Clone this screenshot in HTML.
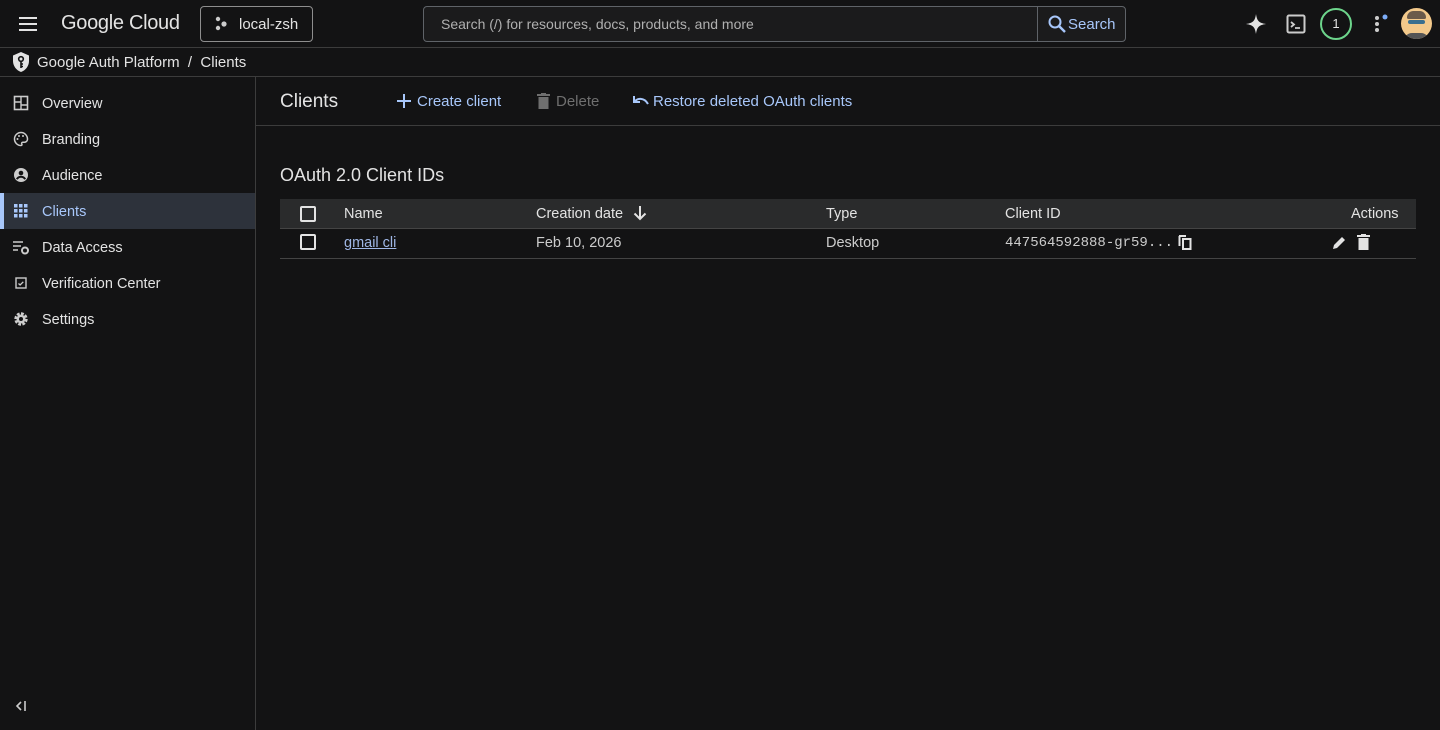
<!DOCTYPE html>
<html><head><meta charset="utf-8"><style>
*{box-sizing:border-box;margin:0;padding:0}
body{width:1440px;height:730px;background:#131314;color:#e3e3e3;font-family:"Liberation Sans",sans-serif;position:relative;overflow:hidden;font-size:14px}
.a{position:absolute}
.bl{color:#a8c7fa}
svg{display:block}
</style></head><body>
<!-- top bar -->
<div class="a" style="left:0;top:0;width:1440px;height:48px;border-bottom:1px solid #3c3c3c"></div>
<svg class="a" style="left:18px;top:14px" width="20" height="20" viewBox="0 0 20 20"><path d="M1 4h18M1 10h18M1 16h18" stroke="#e3e3e3" stroke-width="2"/></svg>
<div class="a" style="left:61px;top:12px;font-size:20px;letter-spacing:-0.3px;color:#e3e3e3">Google Cloud</div>
<div class="a" style="left:200px;top:6px;width:113px;height:36px;border:1px solid #8e8e8e;border-radius:4px"></div>
<svg class="a" style="left:214px;top:16px" width="16" height="16" viewBox="0 0 16 16"><circle cx="4" cy="3" r="2.2" fill="#ccc"/><circle cx="4" cy="12" r="2.2" fill="#ccc"/><circle cx="10" cy="8" r="2.6" fill="#ccc"/></svg>
<div class="a" style="left:239px;top:16px;font-size:15px">local-zsh</div>
<div class="a" style="left:423px;top:6px;width:703px;height:36px;border:1px solid #5f6368;border-radius:4px;background:#1b1b1c"></div>
<div class="a" style="left:1037px;top:7px;width:1px;height:34px;background:#5f6368"></div>
<div class="a" style="left:441px;top:16px;font-size:14px;color:#b0b0b0">Search (/) for resources, docs, products, and more</div>
<svg class="a" style="left:1047px;top:14px" width="20" height="20" viewBox="0 0 20 20"><circle cx="8" cy="8" r="5.5" stroke="#a8c7fa" stroke-width="2" fill="none"/><path d="M12 12l6 6" stroke="#a8c7fa" stroke-width="2.4"/></svg>
<div class="a bl" style="left:1068px;top:16px;font-size:15px">Search</div>
<svg class="a" style="left:1245px;top:13px" width="22" height="22" viewBox="0 0 22 22"><path d="M11 1C12 8 14 10 21 11C14 12 12 14 11 21C10 14 8 12 1 11C8 10 10 8 11 1Z" fill="#e3e3e3"/></svg>
<svg class="a" style="left:1286px;top:14px" width="20" height="20" viewBox="0 0 20 20"><rect x="1.5" y="1.5" width="17" height="17" rx="1.5" stroke="#ccc" stroke-width="2" fill="none"/><path d="M5 8l3 2.5-3 2.5M9 14h5" stroke="#ccc" stroke-width="1.8" fill="none"/></svg>
<div class="a" style="left:1320px;top:8px;width:32px;height:32px;border:2px solid #6dd58c;border-radius:50%;text-align:center;line-height:28px;font-size:13px;color:#e3e3e3">1</div>
<svg class="a" style="left:1370px;top:12px" width="22" height="22" viewBox="0 0 22 22"><circle cx="7" cy="6" r="2" fill="#ccc"/><circle cx="7" cy="12" r="2" fill="#ccc"/><circle cx="7" cy="18" r="2" fill="#ccc"/><circle cx="15" cy="5" r="2.5" fill="#7cacf8"/></svg>
<div class="a" style="left:1401px;top:8px;width:31px;height:31px;border-radius:50%;background:#f3c98b;overflow:hidden"><div class="a" style="left:6px;top:3px;width:19px;height:8px;background:#6b5a4a;border-radius:8px 8px 2px 2px"></div><div class="a" style="left:7px;top:12px;width:17px;height:4px;background:#3a6f8f;border-radius:2px"></div><div class="a" style="left:3px;top:25px;width:25px;height:10px;background:#555;border-radius:8px 8px 0 0"></div></div>
<!-- breadcrumb -->
<div class="a" style="left:0;top:76px;width:1440px;height:1px;background:#3c3c3c"></div>
<svg class="a" style="left:11px;top:51px" width="20" height="22" viewBox="0 0 20 22"><path d="M10 1L2 4.5V10c0 5 3.5 9.5 8 11 4.5-1.5 8-6 8-11V4.5Z" fill="#e3e3e3"/><circle cx="10" cy="8" r="2.3" stroke="#131314" stroke-width="1.6" fill="none"/><path d="M10 10v7M10 13h2M10 15.5h2" stroke="#131314" stroke-width="1.6"/></svg>
<div class="a" style="left:37px;top:54px;font-size:15px">Google Auth Platform &nbsp;/&nbsp; Clients</div>
<!-- sidebar -->
<div class="a" style="left:255px;top:77px;width:1px;height:653px;background:#3c3c3c"></div>
<div class="a" style="left:0;top:193px;width:255px;height:36px;background:#2d323b"></div>
<div class="a" style="left:0;top:193px;width:4px;height:36px;background:#a8c7fa"></div>
<div class="a" style="left:42px;top:96px;font-size:14.5px;line-height:16px">Overview</div>
<div class="a" style="left:42px;top:132px;font-size:14.5px;line-height:16px">Branding</div>
<div class="a" style="left:42px;top:168px;font-size:14.5px;line-height:16px">Audience</div>
<div class="a bl" style="left:42px;top:204px;font-size:14.5px;line-height:16px">Clients</div>
<div class="a" style="left:42px;top:240px;font-size:14.5px;line-height:16px">Data Access</div>
<div class="a" style="left:42px;top:276px;font-size:14.5px;line-height:16px">Verification Center</div>
<div class="a" style="left:42px;top:312px;font-size:14.5px;line-height:16px">Settings</div>
<svg class="a" style="left:13px;top:95px" width="16" height="16" viewBox="0 0 16 16"><rect x="1.5" y="1.5" width="13" height="13" stroke="#ccc" stroke-width="1.6" fill="none"/><path d="M8 2v12M2 7h6M8 10h6" stroke="#ccc" stroke-width="1.4"/></svg>
<svg class="a" style="left:13px;top:131px" width="16" height="16" viewBox="0 0 16 16"><path d="M8 1.5a6.5 6.5 0 100 13c1 0 1.2-.8.8-1.5-.5-.8 0-1.8 1-1.8h1.7a3 3 0 003-3C14.5 4.5 11.6 1.5 8 1.5z" stroke="#ccc" stroke-width="1.5" fill="none"/><circle cx="4.5" cy="8" r="1" fill="#ccc"/><circle cx="6" cy="5" r="1" fill="#ccc"/><circle cx="10" cy="5" r="1" fill="#ccc"/></svg>
<svg class="a" style="left:13px;top:167px" width="16" height="16" viewBox="0 0 16 16"><circle cx="8" cy="8" r="7" fill="#ccc"/><circle cx="8" cy="6" r="2.3" fill="#131314"/><path d="M3.8 12.2c1-1.8 2.5-2.5 4.2-2.5s3.2.7 4.2 2.5" stroke="#131314" stroke-width="2" fill="none"/></svg>
<svg class="a" style="left:14px;top:204px" width="14" height="14" viewBox="0 0 14 14" fill="#a8c7fa"><rect x="0" y="0" width="3.5" height="3.5"/><rect x="5" y="0" width="3.5" height="3.5"/><rect x="10" y="0" width="3.5" height="3.5"/><rect x="0" y="5" width="3.5" height="3.5"/><rect x="5" y="5" width="3.5" height="3.5"/><rect x="10" y="5" width="3.5" height="3.5"/><rect x="0" y="10" width="3.5" height="3.5"/><rect x="5" y="10" width="3.5" height="3.5"/><rect x="10" y="10" width="3.5" height="3.5"/></svg>
<svg class="a" style="left:13px;top:240px" width="17" height="15" viewBox="0 0 17 15"><path d="M0 2h10M0 6h8M0 10h5" stroke="#ccc" stroke-width="1.5"/><circle cx="12" cy="10.5" r="3" stroke="#ccc" stroke-width="2" fill="none"/></svg>
<svg class="a" style="left:15px;top:277px" width="12" height="12" viewBox="0 0 12 12"><rect x="1" y="1" width="10" height="10" stroke="#ccc" stroke-width="1.4" fill="none"/><path d="M3.5 6.5l1.6 1.5 3.2-3.2" stroke="#ccc" stroke-width="1.3" fill="none"/></svg>
<svg class="a" style="left:13px;top:311px" width="16" height="16" viewBox="0 0 16 16"><circle cx="8" cy="8" r="5" fill="none" stroke="#ccc" stroke-width="3.4" stroke-dasharray="2.6 1.3"/><circle cx="8" cy="8" r="4.5" fill="#ccc"/><circle cx="8" cy="8" r="2" fill="#131314"/></svg>
<svg class="a" style="left:14px;top:700px" width="14" height="12" viewBox="0 0 14 12"><path d="M7 2L3 6l4 4M11 1v10" stroke="#ccc" stroke-width="1.6" fill="none"/></svg>
<!-- content header -->
<div class="a" style="left:256px;top:125px;width:1184px;height:1px;background:#3c3c3c"></div>
<div class="a" style="left:280px;top:91px;font-size:19px">Clients</div>
<svg class="a" style="left:397px;top:94px" width="14" height="14" viewBox="0 0 14 14"><path d="M7 0v14M0 7h14" stroke="#a8c7fa" stroke-width="2"/></svg>
<div class="a bl" style="left:417px;top:93px;font-size:15px">Create client</div>
<svg class="a" style="left:537px;top:93px" width="13" height="16" viewBox="0 0 13 16"><path d="M0 2h13M4 0h5" stroke="#6f6f6f" stroke-width="2"/><path d="M1.5 4h10v12h-10z" fill="#6f6f6f"/></svg>
<div class="a" style="left:556px;top:93px;font-size:15px;color:#6f6f6f">Delete</div>
<svg class="a" style="left:632px;top:95px" width="17" height="12" viewBox="0 0 17 12"><path d="M2 1v6h6" stroke="#a8c7fa" stroke-width="2" fill="none"/><path d="M2.5 7C5 3 12 2 16 9" stroke="#a8c7fa" stroke-width="2" fill="none"/></svg>
<div class="a bl" style="left:653px;top:93px;font-size:15px">Restore deleted OAuth clients</div>
<div class="a" style="left:280px;top:165px;font-size:18px">OAuth 2.0 Client IDs</div>
<!-- table -->
<div class="a" style="left:280px;top:199px;width:1136px;height:29px;background:#2a2b2c"></div>
<div class="a" style="left:280px;top:228px;width:1136px;height:1px;background:#444"></div>
<div class="a" style="left:280px;top:258px;width:1136px;height:1px;background:#444"></div>
<div class="a" style="left:300px;top:206px;width:16px;height:16px;border:2px solid #e3e3e3;border-radius:2px"></div>
<div class="a" style="left:300px;top:234px;width:16px;height:16px;border:2px solid #e3e3e3;border-radius:2px"></div>
<div class="a" style="left:344px;top:206px;font-size:14.5px">Name</div>
<div class="a" style="left:536px;top:206px;font-size:14.5px">Creation date</div>
<svg class="a" style="left:633px;top:205px" width="14" height="16" viewBox="0 0 14 16"><path d="M7 1v13M1.5 8.5L7 14l5.5-5.5" stroke="#e3e3e3" stroke-width="2" fill="none"/></svg>
<div class="a" style="left:826px;top:206px;font-size:14.5px">Type</div>
<div class="a" style="left:1005px;top:206px;font-size:14.5px">Client ID</div>
<div class="a" style="left:1351px;top:206px;font-size:14.5px">Actions</div>
<div class="a bl" style="left:344px;top:235px;font-size:14.5px;text-decoration:underline;color:#9fb7e6">gmail cli</div>
<div class="a" style="left:536px;top:235px;font-size:14.5px;color:#ccc">Feb 10, 2026</div>
<div class="a" style="left:826px;top:235px;font-size:14.5px;color:#ccc">Desktop</div>
<div class="a" style="left:1005px;top:235px;font-size:14px;font-family:'Liberation Mono',monospace;color:#ccc">447564592888-gr59...</div>
<svg class="a" style="left:1178px;top:235px" width="14" height="15" viewBox="0 0 14 15"><path d="M1.5 1v10" stroke="#e3e3e3" stroke-width="2"/><path d="M1 1h7" stroke="#e3e3e3" stroke-width="2"/><rect x="5" y="4" width="7.5" height="10" stroke="#e3e3e3" stroke-width="2" fill="none"/></svg>
<svg class="a" style="left:1332px;top:235px" width="15" height="15" viewBox="0 0 15 15"><path d="M1 14l1-4 8-8 3 3-8 8z" fill="#e3e3e3"/></svg>
<svg class="a" style="left:1357px;top:234px" width="13" height="16" viewBox="0 0 13 16"><path d="M0 2h13M4 0.8h5" stroke="#e3e3e3" stroke-width="2"/><path d="M1.5 4h10v12h-10z" fill="#e3e3e3"/></svg>
</body></html>
